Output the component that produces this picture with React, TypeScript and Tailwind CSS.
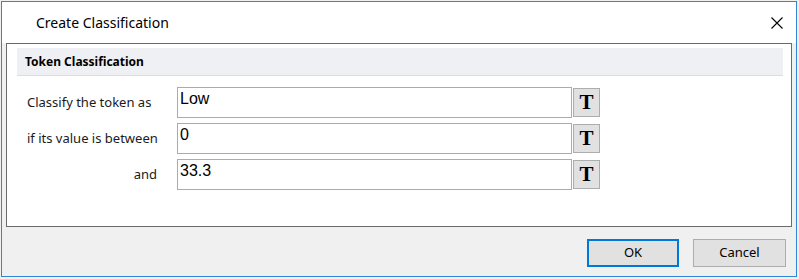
import React from "react";

const ui = { fontFamily: '"Noto Sans", "Open Sans", sans-serif' };
const arial = { fontFamily: '"Liberation Sans", Arial, sans-serif' };
const serif = { fontFamily: '"Liberation Serif", "Times New Roman", serif' };

function Row({ label, value, align }: { label: string; value: string; align: "left" | "right" }) {
  return (
    <div className="flex items-center h-[31px]">
      <div
        className={`w-[130px] text-[13px] text-[#1a1a1a] whitespace-nowrap ${align === "right" ? "text-right" : "text-left"}`}
        style={ui}
      >
        {label}
      </div>
      <div className="ml-[20px] w-[395px] h-[31px] border border-[#ababab] bg-white pl-[2px] pt-[2px] text-[16px] leading-[18px] text-black" style={arial}>
        {value}
      </div>
      <div className="ml-[1px] w-[27px] h-[29px] border border-[#adadad] bg-[#e1e1e1] flex items-center justify-center">
        <span className="text-[21px] font-bold leading-none text-black" style={serif}>T</span>
      </div>
    </div>
  );
}

export default function App() {
  return (
    <div className="w-[799px] h-[279px] bg-[#f0f0f0] pt-[1px] pl-[1px]">
      <div className="w-[796px] h-[276px] border border-[#2e86d6] bg-[#f0f0f0] flex flex-col">
        <div className="h-[41px] bg-white flex items-center justify-between shrink-0">
          <span className="ml-[34px] text-[14px] text-black" style={ui}>Create Classification</span>
          <svg width="12" height="12" viewBox="0 0 12 12" className="mr-[13px]">
            <path d="M0.5 0.5 L11.5 11.5 M11.5 0.5 L0.5 11.5" stroke="#000" strokeWidth="1.1" fill="none" />
          </svg>
        </div>
        <div className="mx-[4px] h-[184px] border border-[#6b6b6b] bg-white pt-[4px] shrink-0">
          <div className="ml-[10px] mr-[8px] h-[28px] bg-[#eff0f3] border-b border-[#dcdde0] flex items-center pl-[8px]">
            <span className="text-[12px] font-bold text-black" style={ui}>Token Classification</span>
          </div>
          <div className="pl-[20px] pt-[11px] flex flex-col gap-[5px]">
            <Row label="Classify the token as" value="Low" align="left" />
            <Row label="if its value is between" value="0" align="right" />
            <Row label="and" value="33.3" align="right" />
          </div>
        </div>
        <div className="flex justify-end gap-[14px] pr-[10px] pt-[12px]">
          <button className="w-[92px] h-[28px] border-2 border-[#0078d7] bg-[#e1e1e1] text-[13px] text-black" style={ui}>OK</button>
          <button className="w-[93px] h-[28px] border border-[#adadad] bg-[#e1e1e1] text-[13px] text-black" style={ui}>Cancel</button>
        </div>
      </div>
    </div>
  );
}
